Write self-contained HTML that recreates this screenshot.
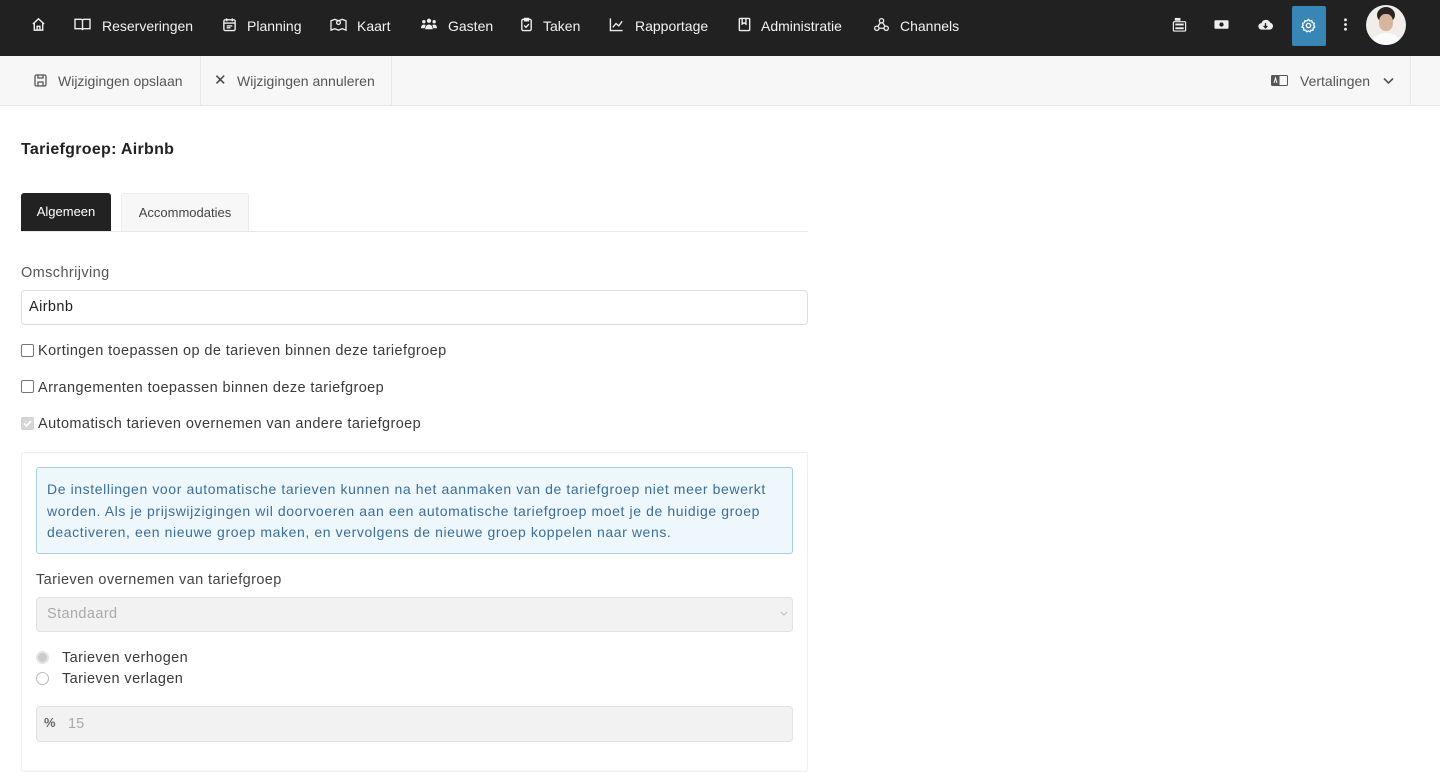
<!DOCTYPE html>
<html><head><meta charset="utf-8"><style>
*{box-sizing:border-box;margin:0;padding:0}
body{width:1440px;height:755px;overflow:hidden;background:#fff;font-family:"Liberation Sans",Arial,sans-serif;color:#333;position:relative}
.a{position:absolute;white-space:nowrap}
.nav{position:absolute;left:0;top:0;width:1440px;height:56px;background:#212121}
.nt{color:#f2f2f2;font-size:14px;top:18px}
.ic{position:absolute;top:17px;width:15px;height:15px}
.tb{position:absolute;left:0;top:56px;width:1440px;height:50px;background:#f7f7f7;border-bottom:1px solid #e6e6e6}
.tt{font-size:14px;color:#555;top:17px}
.cb{position:absolute;width:13px;height:13px;border:1px solid #767676;border-radius:2px;background:#fff}
.lbl{font-size:14.5px;color:#3a3a3a;letter-spacing:0.4px}
</style></head><body>
<div class="nav">
<svg class="ic" style="left:31px" viewBox="0 0 16 16" fill="none" stroke="#eee" stroke-width="1.5"><path d="M2 7.5 8 2l6 5.5M3.5 6.5V14h9V6.5M6.5 14v-4h3v4"/></svg>
<svg class="ic" style="left:74px;width:17px" viewBox="0 0 18 16" fill="none" stroke="#eee" stroke-width="1.5"><path d="M1 2.5h6.5a1.5 1.5 0 0 1 1.5 1.5v10a1.5 1.5 0 0 0-1.5-1.5H1zM17 2.5h-6.5A1.5 1.5 0 0 0 9 4v10a1.5 1.5 0 0 1 1.5-1.5H17z"/></svg>
<div class="a nt" style="left:102px">Reserveringen</div>
<svg class="ic" style="left:222px" viewBox="0 0 16 16" fill="none" stroke="#eee" stroke-width="1.5"><rect x="2" y="3" width="12" height="11.5" rx="1.5"/><path d="M5 1.5v3M11 1.5v3M2 6.5h12M5 9.5h6M5 11.5h4"/></svg>
<div class="a nt" style="left:247px">Planning</div>
<svg class="ic" style="left:330px;width:17px" viewBox="0 0 18 16" fill="none" stroke="#eee" stroke-width="1.4"><path d="M1 4l4-1.5 4 1.5 4-1.5 4 1.5v10l-4-1.5-4 1.5-4-1.5-4 1.5z"/><circle cx="9" cy="6" r="2"/></svg>
<div class="a nt" style="left:357px">Kaart</div>
<svg class="ic" style="left:420px;width:18px" viewBox="0 0 18 16" fill="#eee"><circle cx="9" cy="4" r="2.3"/><circle cx="3.5" cy="5" r="1.8"/><circle cx="14.5" cy="5" r="1.8"/><path d="M5 13c0-3 1.8-5 4-5s4 2 4 5zM0.5 12c0-2.5 1.3-4 3-4 1 0 1.6.4 2 1-.8 1-1 2-1 3zM17.5 12c0-2.5-1.3-4-3-4-1 0-1.6.4-2 1 .8 1 1 2 1 3z"/></svg>
<div class="a nt" style="left:448px">Gasten</div>
<svg class="ic" style="left:519px" viewBox="0 0 16 16" fill="none" stroke="#eee" stroke-width="1.5"><rect x="3" y="2.5" width="10" height="12" rx="1.5"/><path d="M6 1.5h4v2.5H6zM5.5 9l2 2 3-3.5"/></svg>
<div class="a nt" style="left:543px">Taken</div>
<svg class="ic" style="left:609px" viewBox="0 0 16 16" fill="none" stroke="#eee" stroke-width="1.5"><path d="M1.5 1.5v13h13M4 11l3.5-4 3 2.5L14 4.5"/></svg>
<div class="a nt" style="left:635px">Rapportage</div>
<svg class="ic" style="left:737px" viewBox="0 0 16 16" fill="none" stroke="#eee" stroke-width="1.5"><rect x="2.5" y="1.5" width="11" height="13" rx="1"/><path d="M5.5 1.5v6l2-1.3 2 1.3v-6"/></svg>
<div class="a nt" style="left:761px">Administratie</div>
<svg class="ic" style="left:873px;width:17px" viewBox="0 0 17 16" fill="none" stroke="#eee" stroke-width="1.4"><circle cx="8.5" cy="4" r="2.3"/><circle cx="3.5" cy="12" r="2.3"/><circle cx="13.5" cy="12" r="2.3"/><path d="M7.3 6 4.7 10M9.7 6l2.6 4M5.8 12h5.4"/></svg>
<div class="a nt" style="left:900px">Channels</div>
<svg class="ic" style="left:1172px" viewBox="0 0 16 16" fill="#eee"><rect x="3" y="1" width="6" height="3"/><rect x="1.5" y="5" width="13" height="10" rx="1" fill="none" stroke="#eee" stroke-width="1.3"/><rect x="3.5" y="7" width="9" height="2"/><rect x="3.5" y="11" width="9" height="2"/></svg>
<svg class="ic" style="left:1213px;width:17px" viewBox="0 0 17 16"><rect x="1" y="3.5" width="15" height="9" rx="1" fill="#eee"/><circle cx="8.5" cy="8" r="2.3" fill="#212121"/></svg>
<svg class="ic" style="left:1257px;width:17px" viewBox="0 0 17 16"><path d="M4.5 13.5a3.5 3.5 0 0 1-.3-7A5 5 0 0 1 13.5 6a3.8 3.8 0 0 1-.5 7.5z" fill="#eee"/><path d="M8.5 6.5v5M6.5 9.5l2 2 2-2" stroke="#212121" stroke-width="1.4" fill="none"/></svg>
<div class="a" style="left:1292px;top:6px;width:34px;height:40px;background:#3886b6;border-radius:2px"></div>
<svg class="ic" style="left:1301px;top:18px" viewBox="0 0 16 16" fill="none" stroke="#fff" stroke-width="1.4"><path d="M8 1.5l1.4 1.6 2.1-.3.6 2 2 .9-.5 2 1.1 1.8-1.7 1.2-.1 2.1-2.1.2-1.2 1.7L8 13.8l-1.8.9-1.2-1.7-2.1-.2-.1-2.1L1.1 9.5l1.1-1.8-.5-2 2-.9.6-2 2.1.3z"/><circle cx="8" cy="8" r="2.3"/></svg>
<svg class="ic" style="left:1338px" viewBox="0 0 16 16" fill="#eee"><circle cx="8" cy="3" r="1.5"/><circle cx="8" cy="8" r="1.5"/><circle cx="8" cy="13" r="1.5"/></svg>
<div class="a" style="left:1366px;top:5px;width:40px;height:40px;border-radius:50%;background:#f1eeea;overflow:hidden">
<div class="a" style="left:11px;top:2px;width:18px;height:16px;border-radius:50%;background:#2b2522"></div>
<div class="a" style="left:13px;top:9px;width:14px;height:17px;border-radius:45%;background:#d8b59d"></div>
<div class="a" style="left:7px;top:28px;width:26px;height:16px;border-radius:50% 50% 0 0;background:#fbfbfb"></div>
</div>
</div>
<div class="tb">
<div class="a" style="left:200px;top:0;width:1px;height:50px;background:#e8e8e8"></div>
<div class="a" style="left:391px;top:0;width:1px;height:50px;background:#e8e8e8"></div>
<div class="a" style="left:1410px;top:0;width:1px;height:50px;background:#e8e8e8"></div>
<svg class="a" style="left:34px;top:18px;width:13px;height:13px" viewBox="0 0 13 13" fill="none" stroke="#555" stroke-width="1.3"><rect x="1" y="1" width="11" height="11" rx="1.5"/><path d="M4 1v3h5V1M4 12V8h5v4"/></svg>
<div class="a tt" style="left:58px">Wijzigingen opslaan</div>
<div class="a tt" style="left:214px;top:15px;font-size:15px;color:#444">✕</div>
<div class="a tt" style="left:237px">Wijzigingen annuleren</div>
<svg class="a" style="left:1271px;top:19px;width:17px;height:11px" viewBox="0 0 17 11"><rect x="0.5" y="0.5" width="16" height="10" rx="1" fill="none" stroke="#555"/><rect x="0.5" y="0.5" width="8" height="10" fill="#555"/><path d="M3 8l1.5-5L6 8" stroke="#fff" fill="none"/></svg>
<div class="a tt" style="left:1300px">Vertalingen</div>
<svg class="a" style="left:1383px;top:21px;width:11px;height:8px" viewBox="0 0 11 8" fill="none" stroke="#555" stroke-width="1.6"><path d="M1 1.5l4.5 4.5L10 1.5"/></svg>
</div>

<div class="a" style="left:21px;top:141px;font-size:16px;font-weight:bold;color:#222;letter-spacing:0.3px">Tariefgroep: Airbnb</div>
<div class="a" style="left:21px;top:193px;width:90px;height:38px;background:#222;border-radius:3px 3px 0 0;color:#fff;font-size:13px;text-align:center;line-height:38px">Algemeen</div>
<div class="a" style="left:121px;top:193px;width:128px;height:38px;background:#f7f7f7;border:1px solid #ececec;border-bottom:none;border-radius:3px 3px 0 0;color:#444;font-size:13px;text-align:center;line-height:38px">Accommodaties</div>
<div class="a" style="left:21px;top:231px;width:787px;height:1px;background:#e8e8e8"></div>

<div class="a lbl" style="left:21px;top:265px;color:#555">Omschrijving</div>
<div class="a" style="left:21px;top:290px;width:787px;height:35px;border:1px solid #ddd;border-radius:4px;font-size:14.5px;color:#222;line-height:33px;padding-left:7px;letter-spacing:0.4px">Airbnb</div>

<div class="cb" style="left:21px;top:344px"></div>
<div class="a lbl" style="left:38px;top:343px">Kortingen toepassen op de tarieven binnen deze tariefgroep</div>
<div class="cb" style="left:21px;top:380px"></div>
<div class="a lbl" style="left:38px;top:380px">Arrangementen toepassen binnen deze tariefgroep</div>
<div class="cb" style="left:21px;top:417px;background:#d6d6d6;border-color:#d0d0d0"><svg width="11" height="11" viewBox="0 0 11 11" style="position:absolute;left:0;top:0"><path d="M2 5.5l2.5 2.5L9 3" stroke="#fff" stroke-width="1.8" fill="none"/></svg></div>
<div class="a lbl" style="left:38px;top:416px">Automatisch tarieven overnemen van andere tariefgroep</div>

<div class="a" style="left:21px;top:452px;width:787px;height:320px;border:1px solid #eee;border-radius:3px"></div>
<div class="a" style="left:36px;top:467px;width:757px;height:87px;background:#eef7fc;border:1px solid #a8cde5;border-radius:3px;color:#3b6f98;font-size:14px;line-height:21.5px;padding:11px 10px;letter-spacing:0.6px">De instellingen voor automatische tarieven kunnen na het aanmaken van de tariefgroep niet meer bewerkt<br>worden. Als je prijswijzigingen wil doorvoeren aan een automatische tariefgroep moet je de huidige groep<br>deactiveren, een nieuwe groep maken, en vervolgens de nieuwe groep koppelen naar wens.</div>
<div class="a lbl" style="left:36px;top:572px;color:#444">Tarieven overnemen van tariefgroep</div>
<div class="a" style="left:36px;top:597px;width:757px;height:35px;background:#f2f2f2;border:1px solid #e2e2e2;border-radius:4px;color:#aaa;font-size:14.5px;line-height:33px;padding-left:10px;letter-spacing:0.4px">Standaard</div>
<svg class="a" style="left:780px;top:611px;width:8px;height:6px" viewBox="0 0 8 6" fill="none" stroke="#bbb"><path d="M1 1l3 3 3-3"/></svg>
<div class="a" style="left:36px;top:651px;width:13px;height:13px;border-radius:50%;background:#ccc;border:2px solid #e4e4e4"></div>
<div class="a lbl" style="left:62px;top:650px">Tarieven verhogen</div>
<div class="a" style="left:36px;top:672px;width:13px;height:13px;border-radius:50%;border:1px solid #bbb"></div>
<div class="a lbl" style="left:62px;top:671px">Tarieven verlagen</div>
<div class="a" style="left:36px;top:706px;width:757px;height:36px;background:#f2f2f2;border:1px solid #e2e2e2;border-radius:4px;color:#aaa;font-size:14.5px;line-height:34px;padding-left:31px">15</div>
<div class="a" style="left:44px;top:715px;font-size:13px;color:#666;font-weight:bold">%</div>
</body></html>
